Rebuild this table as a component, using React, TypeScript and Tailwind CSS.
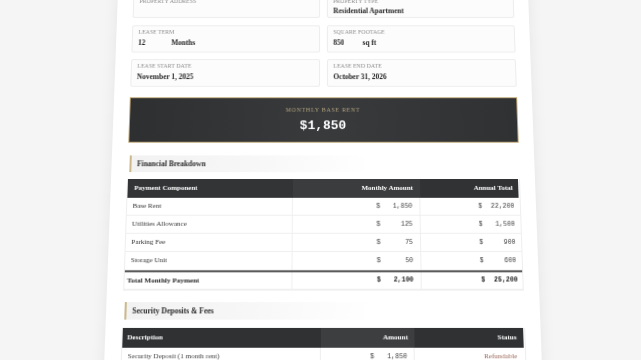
import React from 'react';

const serif = "font-['Liberation_Serif','Times_New_Roman',serif]";
const mono = "font-['Liberation_Mono','Courier_New',monospace]";

interface FieldProps {
  label: string;
  tall?: boolean;
  children?: React.ReactNode;
}

const Field: React.FC<FieldProps> = ({ label, tall, children }) => (
  <div
    className={`${tall ? 'h-[31px] pt-[8.5px]' : 'h-[29px] pt-[3px]'} rounded-[2px] border border-[#ececec] bg-[#fcfcfc] px-[6px]`}
  >
    <div className="text-[6px] leading-[7px] uppercase text-[#8d8d8d]">{label}</div>
    <div className={`${tall ? 'mt-[2px]' : 'mt-[3px]'} flex text-[7.5px] font-bold leading-[9px] text-[#1f1f1f]`}>{children}</div>
  </div>
);

const Money: React.FC<{ value: string; bold?: boolean }> = ({ value, bold }) => (
  <span className={`${mono} inline-flex w-[36px] justify-between text-[6.5px] ${bold ? 'text-[#222]' : 'text-[#444]'}`}>
    <span>$</span>
    <span>{value}</span>
  </span>
);

const SectionHeading: React.FC<{ title: string; className?: string }> = ({ title, className }) => (
  <div
    className={`ml-[2px] flex w-[62%] items-center border-l-2 border-[#cbb98c] bg-linear-to-r from-[#f2f2f2] via-[#f7f7f7] to-transparent pl-[6px] text-[7.5px] font-bold text-[#2a2a2a] ${className ?? ''}`}
  >
    {title}
  </div>
);

const breakdown = [
  { name: 'Base Rent', monthly: '1,850', annual: '22,200' },
  { name: 'Utilities Allowance', monthly: '125', annual: '1,500' },
  { name: 'Parking Fee', monthly: '75', annual: '900' },
  { name: 'Storage Unit', monthly: '50', annual: '600' },
];

const deposits = [
  { name: 'Security Deposit (1 month rent)', amount: '1,850', status: 'Refundable' },
  { name: 'Pet Deposit', amount: '300', status: 'Refundable' },
  { name: 'Application Fee', amount: '50', status: 'Non-refundable' },
];

export default function App() {
  return (
    <div className={`h-[360px] w-full overflow-hidden bg-[#f5f5f5] ${serif}`}>
      <div className="ml-[111px] mt-[-78px] w-[424px] origin-[50%_258px] bg-white px-[15.5px] pb-[60px] pt-[58px] shadow-[0_0_14px_rgba(0,0,0,0.07)] [transform:perspective(900px)_rotateX(9deg)]">
        <div className="grid grid-cols-2 gap-x-[7px] gap-y-[7.5px]">
          <Field label="Property Address" tall />
          <Field label="Property Type" tall>
            Residential Apartment
          </Field>
          <Field label="Lease Term">
            <span className="w-[34px]">12</span>
            <span>Months</span>
          </Field>
          <Field label="Square Footage">
            <span className="w-[30px]">850</span>
            <span>sq ft</span>
          </Field>
          <Field label="Lease Start Date">November 1, 2025</Field>
          <Field label="Lease End Date">October 31, 2026</Field>
        </div>

        <div className="mt-[11px] h-[47px] border border-[#bda472] bg-linear-to-r from-[#2d2f31] via-[#383a3c] to-[#2f3133] pt-[9px] text-center">
          <div className="text-[6px] uppercase leading-[7px] tracking-[0.12em] text-[#b3a27e]">Monthly Base Rent</div>
          <div className={`${mono} mt-[5px] text-[13px] font-bold leading-[15px] text-white`}>$1,850</div>
        </div>

        <SectionHeading title="Financial Breakdown" className="mt-[12.5px] h-[17.5px]" />

        <div className="mt-[7px] border-x border-[#eeeeee] text-[7px] text-[#333]">
          <div className="grid h-[19px] grid-cols-[42.2%_32.6%_25.2%] font-bold text-white">
            <div className="flex items-center bg-[#323436] pl-[7px]">Payment Component</div>
            <div className="flex items-center justify-end bg-[#3a3c3e] pr-[7px]">Monthly Amount</div>
            <div className="flex items-center justify-end bg-[#303234] pr-[6px]">Annual Total</div>
          </div>
          {breakdown.map((row) => (
            <div key={row.name} className="grid h-[18px] grid-cols-[42.2%_32.6%_25.2%] border-b border-[#efefef]">
              <div className="flex items-center border-r border-[#efefef] pl-[6px]">{row.name}</div>
              <div className="flex items-center justify-end border-r border-[#efefef] pr-[7px]">
                <Money value={row.monthly} />
              </div>
              <div className="flex items-center justify-end pr-[5px]">
                <Money value={row.annual} />
              </div>
            </div>
          ))}
          <div className="grid h-[20px] grid-cols-[42.2%_32.6%_25.2%] border-y-2 border-t-[#5b5b5b] border-b-[#f0f0f0] font-bold text-[#1f1f1f]">
            <div className="flex items-center border-r border-[#efefef] pl-[3px]">Total Monthly Payment</div>
            <div className="flex items-center justify-end border-r border-[#efefef] pr-[7px]">
              <Money value="2,100" bold />
            </div>
            <div className="flex items-center justify-end pr-[4px]">
              <Money value="25,200" bold />
            </div>
          </div>
        </div>

        <SectionHeading title="Security Deposits & Fees" className="mt-[11px] h-[17px] w-[38%]" />

        <div className="mt-[8px] border-x border-[#eeeeee] text-[7px] text-[#444]">
          <div className="grid h-[19px] grid-cols-[49.5%_23.2%_27.3%] font-bold text-white">
            <div className="flex items-center bg-[#2f3133] pl-[5px]">Description</div>
            <div className="flex items-center justify-end bg-[#3c3e40] pr-[6px]">Amount</div>
            <div className="flex items-center justify-end bg-[#2f3133] pr-[7px]">Status</div>
          </div>
          {deposits.map((row) => (
            <div key={row.name} className="grid h-[18px] grid-cols-[49.5%_23.2%_27.3%] border-b border-[#efefef]">
              <div className="flex items-center border-r border-[#efefef] pl-[6px]">{row.name}</div>
              <div className="flex items-center justify-end border-r border-[#efefef] pr-[6px]">
                <Money value={row.amount} />
              </div>
              <div className="flex items-center justify-end pr-[7px] text-[#9d6a5c]">{row.status}</div>
            </div>
          ))}
        </div>
      </div>
    </div>
  );
}
